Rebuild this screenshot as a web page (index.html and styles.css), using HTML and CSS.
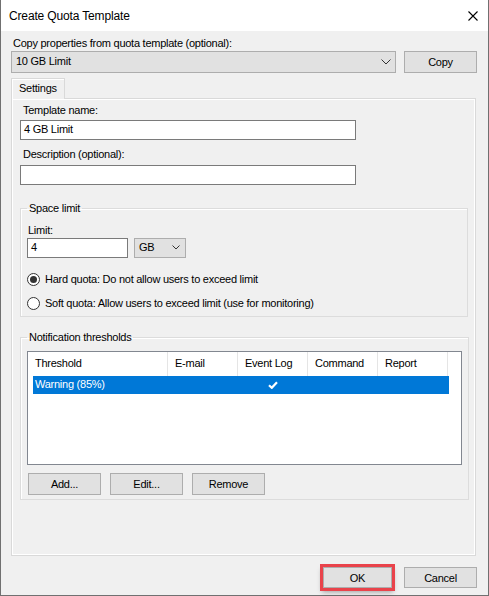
FILE: index.html
```html
<!DOCTYPE html>
<html>
<head>
<meta charset="utf-8">
<title>Create Quota Template</title>
<link rel="stylesheet" href="styles.css">
</head>
<body>
<div class="window">
  <div class="titlebar">
    <span class="title">Create Quota Template</span>
    <svg class="close" width="10" height="10" viewBox="0 0 10 10"><path d="M0.5 0.5 L9.5 9.5 M9.5 0.5 L0.5 9.5" stroke="#000" stroke-width="1.1" fill="none"/></svg>
  </div>
  <div class="client">
    <div class="lbl top-lbl">Copy properties from quota template (optional):</div>
    <div class="copy-row">
      <div class="combo combo-wide"><span>10 GB Limit</span><svg width="10" height="6" viewBox="0 0 10 6"><polyline points="0.5,0.5 5,5 9.5,0.5" stroke="#333" stroke-width="1" fill="none"/></svg></div>
      <button class="btn btn-copy">Copy</button>
    </div>
    <div class="tabs"><div class="tab">Settings</div></div>
    <div class="panel">
      <div class="lbl field-lbl">Template name:</div>
      <div class="textbox tb-name">4 GB Limit</div>
      <div class="lbl field-lbl desc-lbl">Description (optional):</div>
      <div class="textbox tb-desc"></div>

      <fieldset class="group group-space">
        <legend>Space limit</legend>
        <div class="lbl limit-lbl">Limit:</div>
        <div class="limit-row">
          <div class="textbox tb-limit">4</div>
          <div class="combo combo-unit"><span>GB</span><svg width="8" height="5" viewBox="0 0 8 5"><polyline points="0.5,0.5 4,4 7.5,0.5" stroke="#333" stroke-width="1" fill="none"/></svg></div>
        </div>
        <div class="radio-row radio-hard"><span class="radio checked"></span><span>Hard quota: Do not allow users to exceed limit</span></div>
        <div class="radio-row radio-soft"><span class="radio"></span><span>Soft quota: Allow users to exceed limit (use for monitoring)</span></div>
      </fieldset>

      <fieldset class="group group-notify">
        <legend>Notification thresholds</legend>
        <div class="listview">
          <div class="lv-header">
            <div class="col col-threshold">Threshold</div>
            <div class="col">E-mail</div>
            <div class="col">Event Log</div>
            <div class="col">Command</div>
            <div class="col">Report</div>
          </div>
          <div class="lv-row selected">
            <div class="cell cell-threshold">Warning (85%)</div>
            <div class="cell"></div>
            <div class="cell cell-center"><svg width="10" height="8" viewBox="0 0 10 8"><path d="M1 4.2 L3.8 6.8 L9 1.2" stroke="#fff" stroke-width="2.2" fill="none"/></svg></div>
            <div class="cell"></div>
            <div class="cell"></div>
          </div>
        </div>
        <div class="lv-buttons">
          <button class="btn btn-small">Add...</button>
          <button class="btn btn-small">Edit...</button>
          <button class="btn btn-small">Remove</button>
        </div>
      </fieldset>
    </div>
    <div class="footer">
      <button class="btn btn-footer btn-ok">OK</button>
      <button class="btn btn-footer">Cancel</button>
    </div>
  </div>
</div>
</body>
</html>
```

FILE: styles.css
```css
* { box-sizing: border-box; }
html, body { margin: 0; padding: 0; }
body {
  font-family: "Liberation Sans", Arial, sans-serif;
  font-size: 11px;
  letter-spacing: -0.25px;
  line-height: 13px;
  color: #000;
  background: #fff;
}
.window {
  width: 489px;
  height: 596px;
  border: 1px solid #707070;
  border-top: none;
  background: #f0f0f0;
  display: flex;
  flex-direction: column;
}
.titlebar {
  height: 31px;
  flex: none;
  background: #fff;
  display: flex;
  align-items: center;
  justify-content: space-between;
  padding: 0 10px 0 8px;
}
.title {
  font-size: 12px;
  letter-spacing: -0.15px;
  line-height: 14px;
  padding-top: 1px;
}
.close { display: block; margin-top: 1px; }
.client {
  flex: 1;
  padding: 6px 0 0 10px;
  display: flex;
  flex-direction: column;
}
.lbl { white-space: nowrap; }
.top-lbl { padding-left: 2px; }
.copy-row {
  display: flex;
  gap: 8px;
  margin-top: 1px;
}
.combo {
  background: #e1e1e1;
  border: 1px solid #adadad;
  display: flex;
  align-items: center;
  justify-content: space-between;
}
.combo-wide {
  width: 385px;
  height: 22px;
  padding: 0 4px 1px 4px;
}
.btn {
  font-family: inherit;
  font-size: 11px;
  letter-spacing: -0.25px;
  color: #000;
  background: #e1e1e1;
  border: 1px solid #adadad;
  margin: 0;
  padding: 0;
}
.btn-copy { width: 73px; height: 22px; }
.tabs {
  display: flex;
  margin-top: 5px;
}
.tab {
  position: relative;
  margin-bottom: -1px;
  width: 54px;
  height: 21px;
  border: 1px solid #d9d9d9;
  border-bottom: none;
  background: #f0f0f0;
  padding: 3px 0 0 7px;
  box-shadow: inset 1px 1px 0 #fff;
}
.panel {
  width: 465px;
  height: 458px;
  border: 1px solid #d9d9d9;
  box-shadow: inset 1px 1px 0 #fff, inset -1px -1px 0 #fff;
  padding: 5px 7px 0 8px;
}
.field-lbl { padding-left: 3px; }
.desc-lbl { margin-top: 8px; }
.textbox {
  background: #fff;
  border: 1px solid #7a7a7a;
  height: 20px;
  padding: 2px 0 0 3px;
}
.tb-name { width: 336px; margin-top: 3px; }
.tb-desc { width: 336px; margin-top: 4px; }
.group {
  margin: 0;
  border: 1px solid #dcdcdc;
  box-shadow: inset 1px 1px 0 #fff;
  width: 448px;
  padding: 0 6px 0 6px;
}
.group legend {
  padding: 0 2px;
  line-height: 13px;
}
.group-space {
  margin-top: 17px;
  padding-top: 9px;
  padding-bottom: 6px;
}
.limit-lbl { padding-left: 1px; }
.limit-row {
  display: flex;
  gap: 6px;
  margin-top: 1px;
}
.tb-limit { width: 101px; }
.combo-unit {
  width: 52px;
  height: 20px;
  padding: 0 5px 1px 4px;
}
.radio-row {
  display: flex;
  align-items: center;
  gap: 5px;
  height: 13px;
}
.radio-hard { margin-top: 15px; }
.radio-soft { margin-top: 11px; }
.radio {
  width: 13px;
  height: 13px;
  border-radius: 50%;
  border: 1px solid #333;
  background: #fff;
  display: flex;
  align-items: center;
  justify-content: center;
}
.radio.checked::after {
  content: "";
  width: 7px;
  height: 7px;
  border-radius: 50%;
  background: #333;
}
.group-notify {
  margin-top: 14px;
  padding-top: 7px;
  padding-bottom: 4px;
}
.listview {
  width: 435px;
  height: 114px;
  border: 1px solid #828790;
  background: #fff;
}
.lv-header {
  display: flex;
  height: 24px;
}
.col {
  width: 70px;
  border-right: 1px solid #e5e5e5;
  padding: 5px 0 0 7px;
}
.col-threshold { width: 140px; padding-left: 7px; }
.lv-row {
  display: flex;
  height: 18px;
  width: 416px;
  margin-left: 5px;
}
.lv-row.selected {
  background: #0078d7;
  color: #fff;
}
.cell { width: 70px; }
.cell-threshold { width: 135px; padding: 2px 0 0 2px; }
.cell-center {
  display: flex;
  align-items: center;
  justify-content: center;
}
.lv-buttons {
  display: flex;
  gap: 9px;
  margin: 8px 0 0 1px;
}
.btn-small { width: 73px; height: 22px; }
.footer {
  display: flex;
  justify-content: flex-end;
  gap: 12px;
  padding: 11px 11px 0 0;
}
.btn-footer { width: 73px; height: 21px; }
.btn-ok {
  width: 69px;
  outline: 3px solid #e9434b;
  outline-offset: 0;
  box-shadow: 0 3px 5px 1px rgba(0,0,0,0.35);
  margin-right: 0;
}
```
